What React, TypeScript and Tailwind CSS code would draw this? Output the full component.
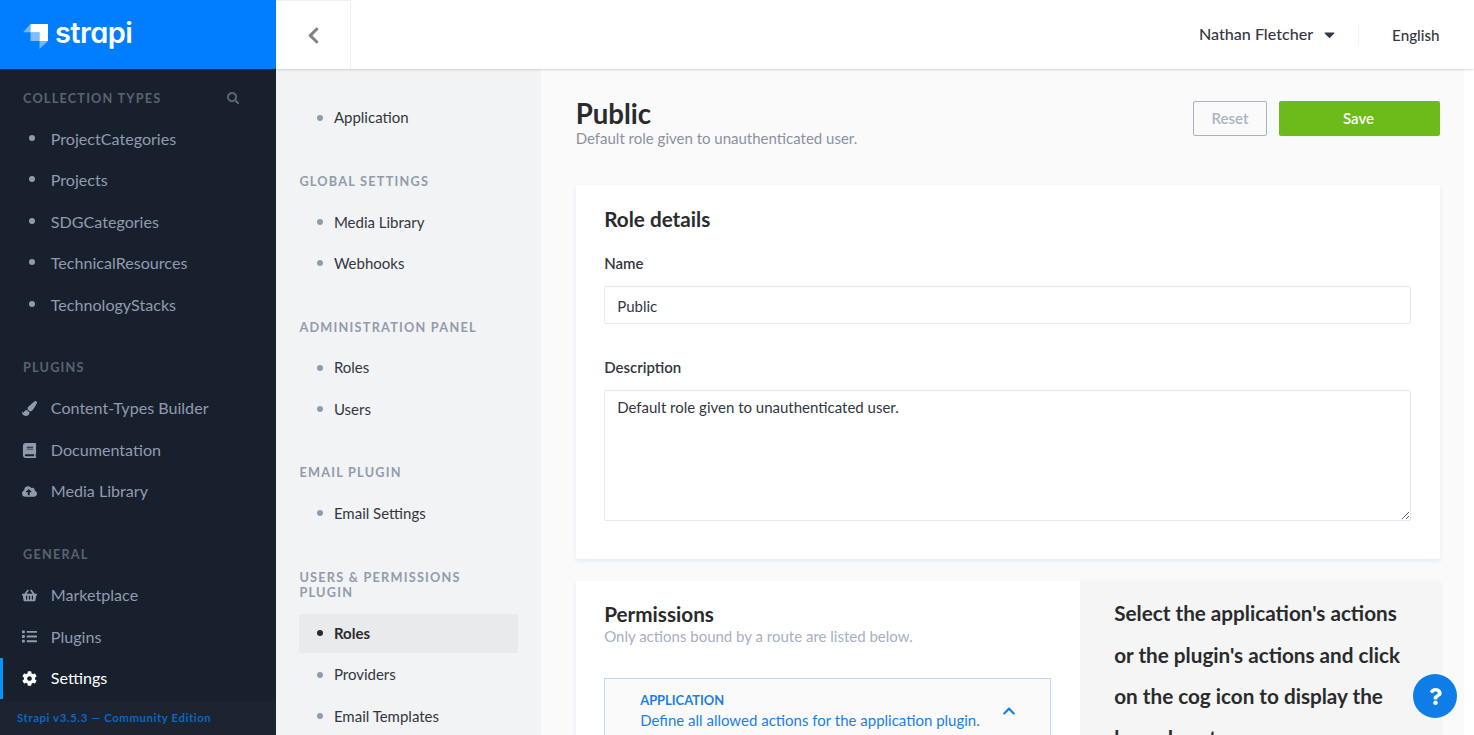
import React from "react";
import {
  FaSearch,
  FaPaintBrush,
  FaBook,
  FaCloudUploadAlt,
  FaShoppingBasket,
  FaList,
  FaCog,
  FaChevronLeft,
  FaChevronUp,
  FaCaretDown,
  FaQuestion,
} from "react-icons/fa";

type MenuLink = { label: string; icon?: React.ReactNode; active?: boolean };

const menu: { title: string; search?: boolean; links: MenuLink[] }[] = [
  {
    title: "Collection Types",
    search: true,
    links: [
      { label: "ProjectCategories" },
      { label: "Projects" },
      { label: "SDGCategories" },
      { label: "TechnicalResources" },
      { label: "TechnologyStacks" },
    ],
  },
  {
    title: "Plugins",
    links: [
      { label: "Content-Types Builder", icon: <FaPaintBrush /> },
      { label: "Documentation", icon: <FaBook /> },
      { label: "Media Library", icon: <FaCloudUploadAlt /> },
    ],
  },
  {
    title: "General",
    links: [
      { label: "Marketplace", icon: <FaShoppingBasket /> },
      { label: "Plugins", icon: <FaList /> },
      { label: "Settings", icon: <FaCog />, active: true },
    ],
  },
];

const settings: { title?: string; links: string[]; active?: string }[] = [
  { links: ["Application"] },
  { title: "Global Settings", links: ["Media Library", "Webhooks"] },
  { title: "Administration Panel", links: ["Roles", "Users"] },
  { title: "Email Plugin", links: ["Email Settings"] },
  {
    title: "Users & Permissions Plugin",
    links: ["Roles", "Providers", "Email Templates"],
    active: "Roles",
  },
];

function Logo() {
  return (
    <div className="flex h-[69px] shrink-0 items-start bg-[#007eff] pl-[23px]">
      <svg className="mt-6 h-[25px] w-[25px]" viewBox="0 0 25 25" fill="#fff">
        <path d="M7.5 0H25v17h-8.5V8.2h-9z" />
        <path d="M7.5 0v8.2H0z" opacity=".45" />
        <path d="M7.5 8.2h9V17h-9z" opacity=".5" />
        <path d="M16.5 17H25l-8.5 8z" opacity=".45" />
      </svg>
      <span className="mt-[14px] ml-[7px] font-[Inter,sans-serif] text-[29px] leading-[38px] font-semibold tracking-[-0.6px] text-white [font-feature-settings:'cv11']">
        strapi
      </span>
    </div>
  );
}

function LeftMenu() {
  return (
    <aside className="flex w-[276.4px] shrink-0 flex-col bg-[#18202e]">
      <Logo />
      <nav className="flex min-h-0 flex-1 flex-col gap-[21px] pt-2">
        {menu.map((section) => (
          <section key={section.title}>
            <div className="flex h-[41.4px] items-center justify-between pr-[37px] pl-[23px] text-[#5b6370]">
              <h3 className="pt-px text-[12.7px] font-bold tracking-[1.2px] uppercase">{section.title}</h3>
              {section.search && <FaSearch className="mt-px text-[12.5px]" />}
            </div>
            {section.links.map((link) => (
              <a
                key={link.label}
                className={`flex h-[41.45px] items-center border-l-3 text-[16.1px] ${
                  link.active ? "border-[#0097f7] text-white" : "border-transparent text-[#919bae]"
                }`}
              >
                <span className="ml-[19px] flex w-[15px] justify-center text-[15px]">
                  {link.icon ?? <span className="mb-[2.4px] ml-[4px] size-1.5 rounded-full bg-[#919bae]" />}
                </span>
                <span className="-mt-[0.4px] ml-[13.8px]">{link.label}</span>
              </a>
            ))}
          </section>
        ))}
      </nav>
      <footer className="flex h-[34.5px] shrink-0 items-center bg-[#1c2431] pl-[17px] text-[11.4px] font-bold tracking-[0.58px] text-[#0d66c2]">
        Strapi v3.5.3 — Community Edition
      </footer>
    </aside>
  );
}

function SettingsNav() {
  return (
    <nav className="w-[265px] shrink-0 overflow-hidden bg-[#f2f3f4] px-[23px] pt-[29px]">
      {settings.map((group, i) => (
        <section key={i} className="mb-[36.9px]">
          {group.title && (
            <h3 className="mb-[12.4px] text-[12.7px] leading-[15.8px] font-bold tracking-[1.24px] text-[#919bae] uppercase">
              {group.title}
            </h3>
          )}
          {group.links.map((label) => {
            const active = label === group.active;
            return (
              <a
                key={label}
                className={`mb-[2.2px] flex h-[39.2px] items-center rounded-[2px] pl-[17.5px] text-[15px] ${
                  active ? "bg-[#e9eaeb] font-bold text-[#292b2c]" : "text-[#333740]"
                }`}
              >
                <span className={`mr-[11px] size-1.5 rounded-full ${active ? "bg-[#292b2c]" : "bg-[#919bae]"}`} />
                {label}
              </a>
            );
          })}
        </section>
      ))}
    </nav>
  );
}

function TopBar() {
  return (
    <header className="relative z-10 flex h-[69px] shrink-0 items-center bg-white pr-[34.5px] text-[16.1px] font-medium text-[#333740] shadow-[0_1px_2px_0_rgba(40,42,49,0.16)]">
      <button className="flex h-full w-[74.5px] items-center justify-center border-t border-r border-[#f0f1f3]">
        <FaChevronLeft className="text-[19px] text-[#808285]" />
      </button>
      <span className="ml-auto">Nathan Fletcher</span>
      <FaCaretDown className="ml-[8px] text-[17px]" />
      <span className="mr-[33px] ml-5 h-[23px] w-px bg-[#f3f4f4]" />
      <span className="pt-px text-[15.2px]">English</span>
    </header>
  );
}

function RoleDetails() {
  return (
    <section className="mt-[36px] h-[374px] shrink-0 rounded-[2px] bg-white pt-[22px] pr-[29.5px] pl-[28.5px] shadow-[0_2px_4px_0_#e3e9f3]">
      <h2 className="text-[20.7px] leading-6 font-bold text-[#292b2c]">Role details</h2>
      <label className="mt-[21.5px] block text-[15px] leading-5 font-semibold text-[#333740]">Name</label>
      <input
        className="mt-[13.5px] block h-[38px] w-full rounded-[2px] border border-[#e3e9f3] px-3 pt-px text-[15px] text-[#333740] outline-none"
        defaultValue="Public"
      />
      <label className="mt-[33px] block text-[15px] leading-5 font-semibold text-[#333740]">Description</label>
      <textarea
        className="mt-[13px] block h-[131px] w-full rounded-[2px] border border-[#e3e9f3] px-3 pt-[6px] text-[15px] leading-5 text-[#333740] outline-none"
        defaultValue="Default role given to unauthenticated user."
      />
    </section>
  );
}

function Permissions() {
  return (
    <section className="mt-[21.5px] flex h-[400px] shrink-0 bg-white shadow-[0_2px_4px_0_#e3e9f3]">
      <div className="w-[504px] shrink-0 px-[28.5px] pt-[21px]">
        <h2 className="text-[20.7px] leading-6 font-bold text-[#292b2c]">Permissions</h2>
        <p className="text-[15px] leading-5 text-[#a8afbe]">Only actions bound by a route are listed below.</p>
        <div className="mt-[32.5px] flex h-[120px] border border-[#bcd8f0] bg-[#fafafb] pr-[34.5px] pl-[35px] text-[#1c7fe5]">
          <div className="pt-[10.5px]">
            <div className="text-[12.9px] leading-5 font-bold uppercase">Application</div>
            <div className="text-[15px] leading-5">Define all allowed actions for the application plugin.</div>
          </div>
          <FaChevronUp className="mt-[24.5px] ml-auto text-[14px]" />
        </div>
      </div>
      <div className="flex-1 bg-[#f5f5f5] pt-[12.7px] pl-[34.5px] text-[20.7px] leading-[41.45px] font-bold text-[#292b2c]">
        <div>Select the application's actions</div>
        <div>or the plugin's actions and click</div>
        <div>on the cog icon to display the</div>
        <div>bound route.</div>
      </div>
    </section>
  );
}

export default function App() {
  return (
    <div className="flex h-[735px] w-[1474px] overflow-hidden bg-white font-[Lato,sans-serif]">
      <LeftMenu />
      <div className="flex min-w-0 flex-1 flex-col">
        <TopBar />
        <div className="flex min-h-0 flex-1 pr-2.5">
          <SettingsNav />
          <main className="flex min-w-0 flex-1 flex-col overflow-hidden bg-[#fafafb] pr-[24px] pl-[34.3px]">
            <div className="flex h-[80px] shrink-0 justify-between pt-[28px]">
              <div>
                <h1 className="pt-[2px] text-[27.6px] leading-[30px] font-bold text-[#292b2c]">Public</h1>
                <p className="-mt-px text-[15px] leading-5 text-[#8b91a0]">
                  Default role given to unauthenticated user.
                </p>
              </div>
              <div className="mt-1 flex gap-3 text-[15px] font-semibold">
                <button className="h-[35px] w-[74px] rounded-[2px] border border-[#aab3c5] text-[#aab3c3]">Reset</button>
                <button className="h-[35px] w-[161px] rounded-[2px] bg-[#6dbb1a] pr-[2px] text-white">Save</button>
              </div>
            </div>
            <RoleDetails />
            <Permissions />
          </main>
        </div>
      </div>
      <button className="fixed right-[17px] bottom-[17px] z-20 flex size-11 items-center justify-center rounded-full bg-[#0e7de7] text-[17px] text-white">
        <FaQuestion />
      </button>
    </div>
  );
}
